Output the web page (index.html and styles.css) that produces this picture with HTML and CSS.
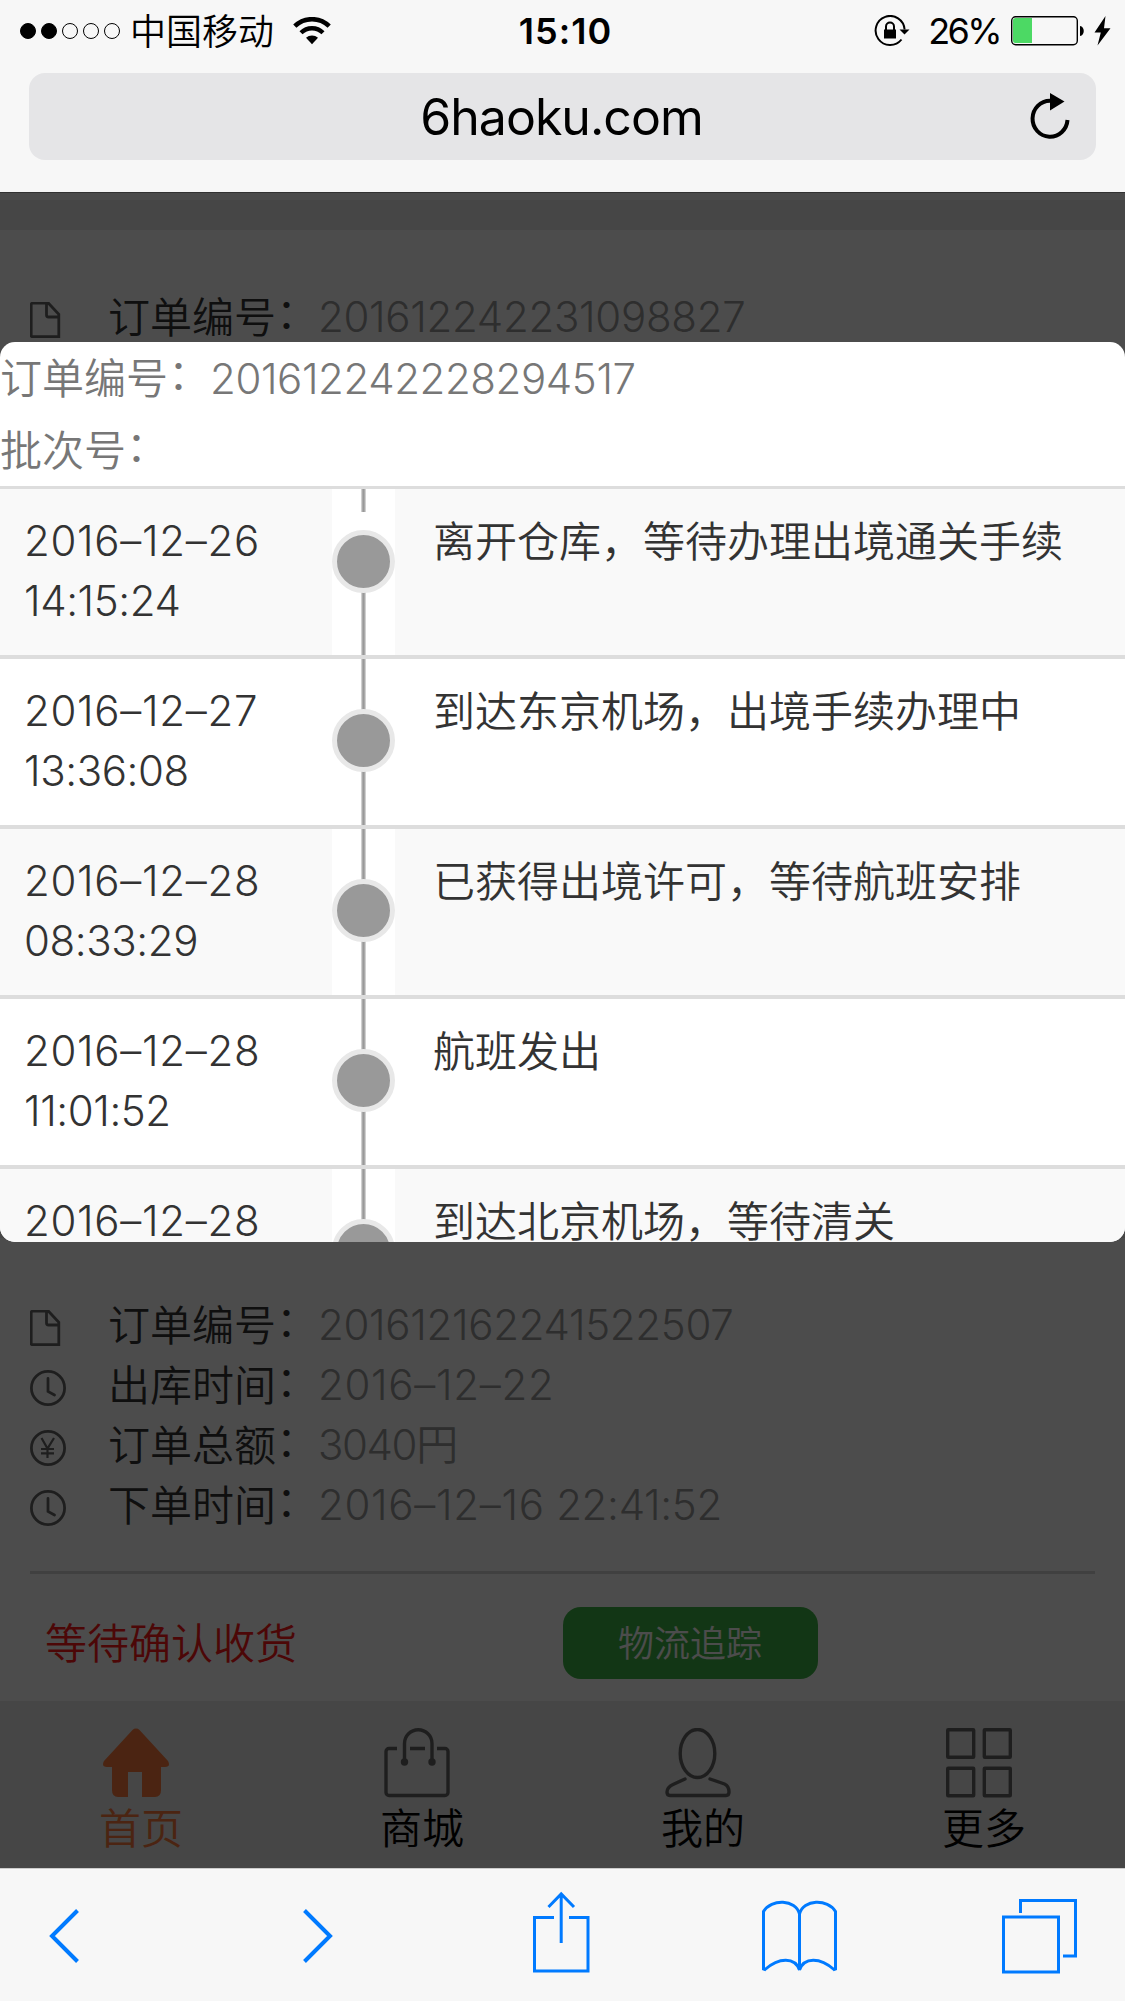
FILE: index.html
```html
<!DOCTYPE html>
<html lang="zh-CN">
<head>
    <meta charset="UTF-8">
    <meta name="viewport" content="width=device-width, initial-scale=1.0">
    <title>6haoku.com</title>
    <link rel="stylesheet" href="styles.css">
</head>
<body>
    <header class="browser-top">
        <div class="status-bar">
            <div class="status-left">
                <div class="signal">
                    <i class="dot full"></i><i class="dot full"></i><i class="dot"></i><i class="dot"></i><i class="dot"></i>
                </div>
                <span class="carrier">中国移动</span>
                <svg class="wifi" width="38" height="28" viewBox="0 0 38 28">
                    <path d="M1.800 9.200a24.500 24.500 0 0 1 34.400 0" fill="none" stroke="#000" stroke-width="4.500"/>
                    <path d="M8 15.800a15.600 15.600 0 0 1 22 0" fill="none" stroke="#000" stroke-width="4.300"/>
                    <path d="M13 20.800a9 9 0 0 1 12 0l-6 6.500z"/>
                </svg>
            </div>
            <div class="clock">15:10</div>
            <div class="status-right">
                <svg class="lock" width="36" height="32" viewBox="0 0 36 32">
                    <path d="M30.600 14.500A14.500 14.500 0 1 0 27.500 24.500" fill="none" stroke="#000" stroke-width="2"/>
                    <path d="M25.500 14.500h10l-5 5z"/>
                    <path d="M10 14.500h12V23.500H10z"/>
                    <path d="M12 15v-3.500a4 4 0 0 1 8 0V15" fill="none" stroke="#000" stroke-width="2"/>
                </svg>
                <span class="percent">26%</span>
                <svg class="battery" width="75" height="30" viewBox="0 0 75 30">
                    <rect x="0.700" y="0.700" width="65.600" height="28" rx="4" fill="none" stroke="#000" stroke-width="1.400"/>
                    <path d="M21 2H4.500a2.500 2.500 0 0 0-2.500 2.500v20A2.500 2.500 0 0 0 4.500 27H21z" fill="#4cd964"/>
                    <path d="M69 10c5 0.500 5 9.500 0 10z"/>
                </svg>
                <svg class="bolt" width="17" height="30" viewBox="0 0 17 30">
                    <path d="M11.500 0L0.500 16.500h6.300L3.500 29.500 16.500 12.300H10z"/>
                </svg>
            </div>
        </div>
        <div class="url-bar">
            <span class="url">6haoku.com</span>
            <svg class="reload" width="42" height="48" viewBox="0 0 42 48">
                <path d="M21 7.700A17.500 18 0 1 0 38.500 27" fill="none" stroke="#000" stroke-width="4"/>
                <path d="M21 0l14.500 8.500L21 17.500z"/>
            </svg>
        </div>
    </header>

    <main class="page">
        <div class="orders">
            <section class="order first">
                <div class="row">
                    <svg class="icon" viewBox="0 0 36 36"><path d="M2.500 1.200h16l10.300 11v22.500H2.500a1.300 1.300 0 0 1-1.300-1.300V2.500a1.300 1.300 0 0 1 1.300-1.300zM16.500 1.500v11.500a2 2 0 0 0 2 2h10"/></svg>
                    <span class="label">订单编号<i class="colon">：</i></span><span class="value">201612242231098827</span>
                </div>
            </section>
            <section class="order">
                <div class="row">
                    <svg class="icon" viewBox="0 0 36 36"><path d="M2.500 1.200h16l10.300 11v22.500H2.500a1.300 1.300 0 0 1-1.300-1.300V2.500a1.300 1.300 0 0 1 1.300-1.300zM16.500 1.500v11.500a2 2 0 0 0 2 2h10"/></svg>
                    <span class="label">订单编号<i class="colon">：</i></span><span class="value">201612162241522507</span>
                </div>
                <div class="row">
                    <svg class="icon" viewBox="0 0 36 36"><circle cx="18" cy="18" r="16.600"/><path d="M18 8.500v13l6.500 3.500" stroke-linecap="round"/></svg>
                    <span class="label">出库时间<i class="colon">：</i></span><span class="value date">2016–12–22</span>
                </div>
                <div class="row">
                    <svg class="icon" viewBox="0 0 36 36"><circle cx="18" cy="18" r="16.600"/><path d="M11.500 8l6 10.500L24 8M17.500 18.500v9.500M11 19h13M11 23.300h13" stroke-width="2.200"/></svg>
                    <span class="label">订单总额<i class="colon">：</i></span><span class="value price">3040円</span>
                </div>
                <div class="row">
                    <svg class="icon" viewBox="0 0 36 36"><circle cx="18" cy="18" r="16.600"/><path d="M18 8.500v13l6.500 3.500" stroke-linecap="round"/></svg>
                    <span class="label">下单时间<i class="colon">：</i></span><span class="value"><span class="date">2016–12–16</span> 22:41:52</span>
                </div>
                <div class="order-footer">
                    <span class="state">等待确认收货</span>
                    <button class="track-btn">物流追踪</button>
                </div>
            </section>
        </div>

        <nav class="tabs">
            <a class="tab active">
                <svg class="tab-icon" viewBox="0 0 66 70">
                    <path d="M29.500 2a5 5 0 0 1 7 0L65 33q3 6-3 6h-4v23q0 7-6 7H39V44H25v25h-10q-6 0-6-7V39H4q-6 0-3-6z" fill="#fa7b3c"/>
                </svg>
                <span>首页</span>
            </a>
            <a class="tab">
                <svg class="tab-icon" viewBox="0 0 66 70">
                    <g fill="none" stroke="#666" stroke-width="3.400">
                        <path d="M13 20.500H5a3 3 0 0 0-3 3V64.500a3 3 0 0 0 3 3h56a3 3 0 0 0 3-3V23.500a3 3 0 0 0-3-3h-8M26 20.500h15"/>
                        <path d="M20.500 33V15.500a13.750 13.750 0 0 1 27.500 0v17.500"/>
                    </g>
                    <circle cx="20.500" cy="34" r="3.700" fill="#666"/>
                    <circle cx="48" cy="34" r="3.700" fill="#666"/>
                </svg>
                <span>商城</span>
            </a>
            <a class="tab">
                <svg class="tab-icon" viewBox="0 0 66 70">
                    <g fill="none" stroke="#666" stroke-width="3.400">
                        <ellipse cx="32.500" cy="25.500" rx="17.300" ry="24"/>
                        <path d="M20 51L8 56.500Q2 59.500 2 64q0 3.500 3 3.500h56q3 0 3-3.500 0-6-4.500-8L45 51" stroke-linecap="round"/>
                    </g>
                </svg>
                <span>我的</span>
            </a>
            <a class="tab">
                <svg class="tab-icon" viewBox="0 0 66 70">
                    <g fill="none" stroke="#666" stroke-width="3.400">
                        <rect x="1.700" y="1.700" width="26" height="27.500" rx="0.500"/>
                        <rect x="38.300" y="1.700" width="26" height="27.500" rx="0.500"/>
                        <rect x="1.700" y="40.300" width="26" height="27.500" rx="0.500"/>
                        <rect x="38.300" y="40.300" width="26" height="27.500" rx="0.500"/>
                    </g>
                </svg>
                <span>更多</span>
            </a>
        </nav>

        <!-- 物流追踪弹窗 -->
        <div class="mask"></div>
        <div class="dialog">
            <div class="dialog-head">
                <p>订单编号<i class="colon">：</i><span class="num">201612242228294517</span></p>
                <p>批次号<i class="colon">：</i></p>
            </div>
            <div class="track">
                <div class="track-row start">
                    <div class="time"><span class="date">2016–12–26</span><br>14:15:24</div>
                    <div class="line"><i class="node"></i></div>
                    <div class="info">离开仓库，等待办理出境通关手续</div>
                </div>
                <div class="track-row">
                    <div class="time"><span class="date">2016–12–27</span><br>13:36:08</div>
                    <div class="line"><i class="node"></i></div>
                    <div class="info">到达东京机场，出境手续办理中</div>
                </div>
                <div class="track-row">
                    <div class="time"><span class="date">2016–12–28</span><br>08:33:29</div>
                    <div class="line"><i class="node"></i></div>
                    <div class="info">已获得出境许可，等待航班安排</div>
                </div>
                <div class="track-row">
                    <div class="time"><span class="date">2016–12–28</span><br>11:01:52</div>
                    <div class="line"><i class="node"></i></div>
                    <div class="info">航班发出</div>
                </div>
                <div class="track-row last">
                    <div class="time"><span class="date">2016–12–28</span></div>
                    <div class="line"><i class="node"></i></div>
                    <div class="info">到达北京机场，等待清关</div>
                </div>
            </div>
        </div>
    </main>

    <footer class="browser-bottom">
        <svg class="back" width="32" height="56" viewBox="0 0 32 56"><path d="M28.500 2.500L3 28l25.500 25.500" stroke-width="4"/></svg>
        <svg class="forward" width="32" height="56" viewBox="0 0 32 56"><path d="M3.500 2.500L29 28 3.500 53.500" stroke-width="4"/></svg>
        <svg class="share" width="58" height="82" viewBox="0 0 58 82"><path d="M22 26.500H2.500V80H56V26.500H37M29.200 52V3M16.500 16L29.200 3 42 16"/></svg>
        <svg class="book" width="75" height="73" viewBox="0 0 75 73"><path d="M37.500 14v56C33 57 17 57 3 69.500L1.500 69V11.500C9-1.500 34-1 37.500 14 41-1 66-1.500 73.500 11.500V69L72 69.500C58 57 42 57 37.500 70"/></svg>
        <svg class="windows" width="75" height="76" viewBox="0 0 75 76"><path d="M1.500 19h55v55h-55zM18.500 15V2.500h55v55.500H61"/></svg>
    </footer>
</body>
</html>
```

FILE: styles.css
```css
* {
    box-sizing: border-box;
}

body {
    margin: 0;
    width: 1125px;
    height: 2001px;
    display: flex;
    flex-direction: column;
    overflow: hidden;
    background: #f7f7f7;
    color: #000;
    font-family: "Inter", "Noto Sans CJK SC", sans-serif;
    font-size: 42px;
    font-weight: 350;
    line-height: 60px;
}

svg {
    display: block;
    flex: none;
}

p {
    margin: 0;
}

.colon {
    font-style: normal;
    line-height: 0;
    vertical-align: 4px;
}

/* 浏览器顶部 */
.browser-top {
    height: 193px;
    flex: none;
    border-bottom: 1px solid #333;
}

.status-bar {
    height: 73px;
    padding: 0 14px 12px 20px;
    display: grid;
    grid-template-columns: 1fr auto 1fr;
    align-items: center;
    font-size: 36px;
    line-height: 40px;
}

.status-left,
.status-right {
    display: flex;
    align-items: center;
}

.status-right {
    justify-content: flex-end;
}

.signal {
    display: flex;
    gap: 5px;
}

.dot {
    width: 16px;
    height: 16px;
    border: 1px solid #000;
    border-radius: 50%;
}

.dot.full {
    background: #000;
}

.carrier {
    margin: 2px 0 0 10px;
}

.wifi {
    margin-left: 19px;
}

.clock {
    font-weight: 600;
    letter-spacing: 1px;
}

.percent {
    margin: 1px 11px 0 18px;
    font-weight: 400;
    letter-spacing: -2.6px;
}

.bolt {
    margin-left: 8px;
}

.url-bar {
    height: 87px;
    margin: 0 29px;
    padding: 0 25px;
    display: grid;
    grid-template-columns: 1fr auto 1fr;
    align-items: center;
    background: #e5e5e7;
    border-radius: 16px;
}

.url {
    grid-column: 2;
    margin-left: -2px;
    font-size: 50px;
    font-weight: 400;
    letter-spacing: -1px;
}

.reload {
    justify-self: end;
}

/* 订单页面 */
.page {
    position: relative;
    height: 1676px;
    flex: none;
    padding-top: 7px;
    display: flex;
    flex-direction: column;
    background: #fff;
    border-bottom: 1px solid #ccc;
}

.orders {
    flex: 1;
    padding-top: 30px;
    display: flex;
    flex-direction: column;
    gap: 30px;
    background: #e9e9e9;
}

.order {
    flex: 1;
    padding: 57px 30px 0;
    background: #fff;
}

.order.first {
    flex: none;
    height: 978px;
}

.row {
    display: flex;
    align-items: center;
    height: 60px;
}

.icon {
    width: 36px;
    height: 36px;
    margin-top: 6px;
    fill: none;
    stroke: #666;
    stroke-width: 2.8;
}

.label {
    margin: 2px 0 0 42px;
    width: 210px;
    white-space: nowrap;
    color: #333;
}

.value {
    color: #999;
    letter-spacing: -0.3px;
}

.date {
    letter-spacing: 0.7px;
}

.price {
    letter-spacing: -1.4px;
}

.order-footer {
    margin-top: 36px;
    padding: 33px 0 0 15px;
    display: flex;
    align-items: center;
    border-top: 3px solid #d5d5d5;
}

.state {
    width: 518px;
    padding-top: 2px;
    color: #ff1a1a;
}

.track-btn {
    width: 255px;
    height: 72px;
    padding: 0 1px 4px 0;
    border: none;
    border-radius: 18px;
    background: #3fb446;
    color: #fff;
    font-family: inherit;
    font-size: 36px;
    font-weight: 350;
}

.tabs {
    height: 167px;
    flex: none;
    display: flex;
    justify-content: space-between;
    padding: 27px 99px 0;
    background: #e9e9e9;
}

.tab {
    width: 84px;
}

.tab-icon {
    width: 66px;
    height: 70px;
    margin-left: 4px;
}

.tab span {
    display: block;
    margin-top: 1px;
}

.tab.active {
    color: #fa7b3c;
}

/* 弹窗 */
.mask {
    position: absolute;
    top: 0;
    right: 0;
    bottom: 0;
    left: 0;
    background: rgba(0, 0, 0, 0.7);
}

.dialog {
    position: absolute;
    top: 149px;
    left: 0;
    width: 100%;
    height: 900px;
    overflow: hidden;
    border-radius: 15px;
    background: #fff;
}

.dialog-head {
    height: 144px;
    padding-top: 1px;
    color: #777;
    line-height: 72px;
}

.num {
    letter-spacing: -0.4px;
}

.track {
    border-top: 3px solid #ddd;
    color: #333;
}

.track-row {
    display: grid;
    grid-template-columns: 332px 63px 1fr;
    height: 170px;
    border-bottom: 4px solid #ddd;
}

.track-row:nth-child(odd) {
    background: #f9f9f9;
}

.time {
    padding: 22px 0 0 24px;
    letter-spacing: -0.4px;
}

.line {
    padding-top: 50px;
    background: linear-gradient(90deg, #d0d0d0 1px, #aaa 1px, #aaa 2px, #999 2px, #999 3px, #aaa 3px, #aaa 4px, #d0d0d0 4px) 29px 0 / 5px 100% no-repeat #fff;
}

.node {
    display: block;
    width: 63px;
    height: 63px;
    border: 5.500px solid #e8e8e8;
    border-radius: 50%;
    background: #999;
}

/* 第一条的线在圆点上方断开 */
.start .line {
    padding-top: 41px;
    background:
        linear-gradient(#fff, #fff) 0 23px / 100% 22px no-repeat,
        linear-gradient(90deg, #d0d0d0 1px, #aaa 1px, #aaa 2px, #999 2px, #999 3px, #aaa 3px, #aaa 4px, #d0d0d0 4px) 29px 0 / 5px 100% no-repeat #fff;
}

.info {
    padding: 23px 0 0 38px;
}

.last .time,
.last .info {
    padding-top: 31px;
    line-height: 42px;
}

.last .info {
    padding-top: 32px;
}

/* 浏览器底部 */
.browser-bottom {
    flex: 1;
    display: flex;
    align-items: center;
    padding: 2px 0 0 49px;
}

.browser-bottom svg {
    fill: none;
    stroke: #007aff;
    stroke-width: 3;
}

.forward {
    margin-left: 220px;
}

.share {
    margin: 0 0 8px 199px;
}

.book {
    margin-left: 172px;
}

.windows {
    margin-left: 165px;
}
```
